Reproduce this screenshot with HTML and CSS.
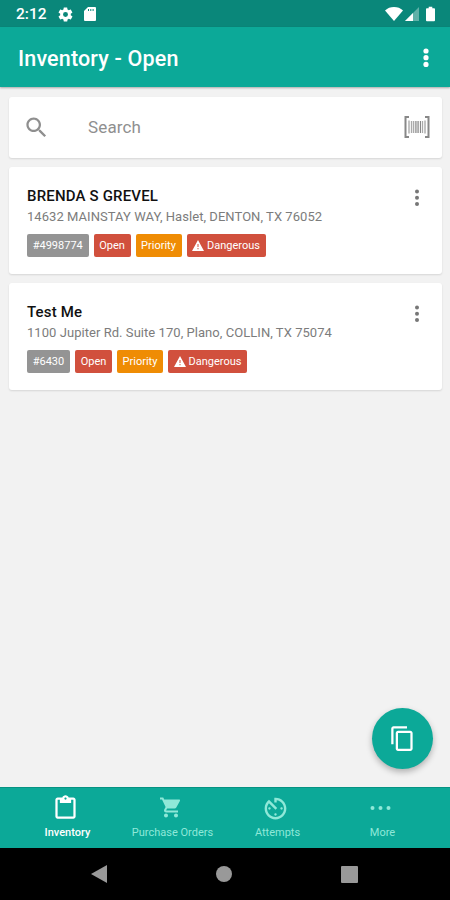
FILE: index.html
```html
<!DOCTYPE html>
<html lang="en">
<head>
  <meta charset="UTF-8" />
  <meta name="viewport" content="width=device-width, initial-scale=1.0"/>
  <title>Inventory - Open</title>
  <link rel="stylesheet" href="styles.css">
</head>
<body>

  <div class="status-bar">
    <span class="time">2:12</span>
    <svg class="gear" width="17" height="17" viewBox="0 0 24 24"><path d="M19.4 13c0-.3.1-.6.1-1s0-.7-.1-1l2.1-1.600c.2-.2.2-.4.1-.6l-2-3.500c-.1-.2-.4-.3-.6-.2l-2.500 1c-.5-.4-1.100-.7-1.700-1l-.4-2.600c0-.3-.2-.5-.4-.5h-4c-.2 0-.5.2-.5.4l-.4 2.700c-.6.2-1.100.6-1.700 1l-2.500-1c-.2-.1-.5 0-.6.200l-2 3.500c-.1.200 0 .5.200.6L4.600 11c0 .3-.1.600-.1 1s0 .700.100 1l-2.100 1.600c-.2.200-.3.400-.200.600l2 3.500c.1.200.4.300.600.200l2.500-1c.5.400 1.100.700 1.700 1l.400 2.600c0 .300.200.500.500.500h4c.200 0 .500-.200.500-.400l.400-2.700c.600-.200 1.100-.600 1.700-1l2.500 1c.200.100.500 0 .600-.200l2-3.500c.100-.200 0-.500-.200-.600zM12 15.500a3.500 3.500 0 1 1 0-7 3.500 3.500 0 0 1 0 7z"/></svg>
    <svg class="sd" width="12" height="14" viewBox="0 0 12 14"><path d="M4 0h7a1 1 0 0 1 1 1v12a1 1 0 0 1-1 1H1a1 1 0 0 1-1-1V4z"/><path class="slot" d="M4 2h1v2H4zM6.300 2h1v2h-1zM8.600 2h1v2h-1z"/></svg>
    <div class="signals">
      <svg width="18" height="14" viewBox="0 0 18 14"><path d="M0 3.500C2.500 1 5.500 0 9 0s6.500 1 9 3.500L9 14z"/></svg>
      <svg width="14" height="14" viewBox="0 0 14 14"><path opacity=".35" d="M14 0v14H0z"/><path d="M8 6v8H0z"/></svg>
      <svg class="battery" width="9" height="16" viewBox="0 0 10 16"><path d="M3 0h4v1.500h2a1 1 0 0 1 1 1V15a1 1 0 0 1-1 1H1a1 1 0 0 1-1-1V2.500a1 1 0 0 1 1-1h2z"/></svg>
    </div>
  </div>

  <header class="app-bar">
    <h1>Inventory - Open</h1>
    <svg width="6" height="20" viewBox="0 0 6 20"><circle cx="3" cy="3" r="2.600"/><circle cx="3" cy="9.700" r="2.600"/><circle cx="3" cy="16.400" r="2.600"/></svg>
  </header>

  <main>
    <div class="card search">
      <svg class="search-icon" width="27" height="27" viewBox="0 0 24 24"><path d="M15.500 14h-.790l-.280-.270C15.410 12.590 16 11.110 16 9.500 16 5.910 13.090 3 9.500 3S3 5.910 3 9.500 5.910 16 9.500 16c1.610 0 3.090-.590 4.230-1.570l.270.280v.790l5 4.990L20.490 19l-4.990-5zm-6 0C7.010 14 5 11.990 5 9.500S7.010 5 9.500 5 14 7.010 14 9.500 11.990 14 9.500 14z"/></svg>
      <span class="placeholder">Search</span>
      <svg class="barcode" width="26" height="22" viewBox="0 0 26 22">
        <path class="bracket" d="M5 1H1.500v20H5M21 1h3.500v20H21"/>
        <path class="lines" d="M5 4.500v13M21 4.500v13"/>
        <path class="lines light" d="M7.500 5v12M9.500 5v12M11.500 5v12M14.500 5v12M18.500 5v12"/>
        <path class="lines" d="M13 5v12M16.500 5v12"/>
      </svg>
    </div>

    <div class="card item">
      <h2>BRENDA S GREVEL</h2>
      <p>14632 MAINSTAY WAY, Haslet, DENTON, TX 76052</p>
      <div class="tags">
        <span class="tag number">#4998774</span>
        <span class="tag open">Open</span>
        <span class="tag priority">Priority</span>
        <span class="tag danger"><svg width="12" height="11" viewBox="0 0 12 11"><path fill-rule="evenodd" d="M6 0l6 11H0zM5.500 4v3h1V4zm0 4v1.200h1V8z"/></svg>Dangerous</span>
      </div>
      <svg class="dots" width="6" height="18" viewBox="0 0 6 18"><circle cx="3" cy="2.500" r="2"/><circle cx="3" cy="8.800" r="2"/><circle cx="3" cy="15.100" r="2"/></svg>
    </div>

    <div class="card item">
      <h2>Test Me</h2>
      <p>1100 Jupiter Rd. Suite 170, Plano, COLLIN, TX 75074</p>
      <div class="tags">
        <span class="tag number short">#6430</span>
        <span class="tag open">Open</span>
        <span class="tag priority">Priority</span>
        <span class="tag danger"><svg width="12" height="11" viewBox="0 0 12 11"><path fill-rule="evenodd" d="M6 0l6 11H0zM5.500 4v3h1V4zm0 4v1.200h1V8z"/></svg>Dangerous</span>
      </div>
      <svg class="dots" width="6" height="18" viewBox="0 0 6 18"><circle cx="3" cy="2.500" r="2"/><circle cx="3" cy="8.800" r="2"/><circle cx="3" cy="15.100" r="2"/></svg>
    </div>
  </main>

  <div class="fab">
    <svg width="27" height="27" viewBox="0 0 24 24"><path d="M16 1H4c-1.100 0-2 .9-2 2v14h2V3h12V1zm3 4H8c-1.100 0-2 .9-2 2v14c0 1.100.9 2 2 2h11c1.100 0 2-.9 2-2V7c0-1.100-.9-2-2-2zm0 16H8V7h11v14z"/></svg>
  </div>

  <nav class="tabs">
    <a class="tab active">
      <svg width="27" height="27" viewBox="0 0 24 24"><path d="M19 3h-4.180C14.400 1.840 13.300 1 12 1s-2.400.840-2.820 2H5c-1.100 0-2 .9-2 2v15c0 1.100.9 2 2 2h14c1.100 0 2-.9 2-2V5c0-1.100-.9-2-2-2zm-7 0c.550 0 1 .450 1 1s-.450 1-1 1-1-.450-1-1 .450-1 1-1zm7 17H5V5h2v3h10V5h2v15z"/></svg>
      <span>Inventory</span>
    </a>
    <a class="tab orders">
      <svg width="24" height="26" viewBox="0 0 24 24"><path d="M7 18c-1.100 0-2 .9-2 2s.9 2 2 2 2-.9 2-2-.9-2-2-2zM1 2v2h2l3.600 7.590-1.350 2.450c-.160.280-.250.610-.250.960 0 1.100.9 2 2 2h12v-2H7.420c-.140 0-.250-.110-.250-.250l.030-.120.900-1.630h7.450c.750 0 1.410-.410 1.750-1.030l3.580-6.490A1 1 0 0 0 20 4H5.210l-.940-2H1zm16 16c-1.100 0-2 .9-2 2s.9 2 2 2 2-.9 2-2-.9-2-2-2z"/></svg>
      <span>Purchase Orders</span>
    </a>
    <a class="tab attempts">
      <svg width="29" height="29" viewBox="0 0 24 24"><path d="M11 17c0 .550.450 1 1 1s1-.450 1-1-.450-1-1-1-1 .450-1 1zm0-14v4h2V5.080c3.390.490 6 3.390 6 6.920 0 3.870-3.130 7-7 7s-7-3.130-7-7c0-1.680.590-3.220 1.580-4.420L12 13l1.410-1.410-6.800-6.800v.020C4.420 6.450 3 9.050 3 12c0 4.970 4.020 9 9 9 4.970 0 9-4.030 9-9s-4.030-9-9-9h-1zm7 9c0-.550-.450-1-1-1s-1 .450-1 1 .450 1 1 1 1-.450 1-1zM6 12c0 .550.450 1 1 1s1-.450 1-1-.450-1-1-1-1 .450-1 1z"/></svg>
      <span>Attempts</span>
    </a>
    <a class="tab">
      <svg width="27" height="27" viewBox="0 0 27 27"><circle cx="5.500" cy="14" r="2"/><circle cx="13.500" cy="14" r="2"/><circle cx="21.500" cy="14" r="2"/></svg>
      <span>More</span>
    </a>
  </nav>

  <div class="system-nav">
    <svg width="16" height="18" viewBox="0 0 16 18"><path d="M16 0v18L0 9z"/></svg>
    <svg width="16" height="16" viewBox="0 0 16 16"><circle cx="8" cy="8" r="8"/></svg>
    <svg width="17" height="17" viewBox="0 0 17 17"><rect width="17" height="17" rx="1"/></svg>
  </div>

</body>
</html>
```
FILE: styles.css
```css
* {
  box-sizing: border-box;
}
body {
  margin: 0;
  height: 900px;
  display: flex;
  flex-direction: column;
  position: relative;
  overflow: hidden;
  background: #f2f2f2;
  font-family: Roboto, "Liberation Sans", sans-serif;
}
svg {
  display: block;
  fill: currentColor;
  flex: none;
}
.status-bar {
  height: 27px;
  display: flex;
  align-items: center;
  padding: 1px 15px 0 16px;
  background: #0a877a;
  color: #fff;
}
.time {
  width: 41px;
  font-size: 15.5px;
  font-weight: 500;
}
.gear {
  margin-right: 10px;
}
.slot {
  fill: #0a877a;
}
.signals {
  display: flex;
  align-items: center;
  gap: 2px;
  margin-left: auto;
}
.battery {
  margin-left: 5px;
}
.app-bar {
  height: 60px;
  display: flex;
  align-items: center;
  justify-content: space-between;
  padding: 2px 21px 0 18px;
  background: #0ca998;
  color: #fff;
  box-shadow: 0 1px 2px rgba(0, 0, 0, 0.3);
}
h1 {
  margin: 0;
  font-size: 21.5px;
  font-weight: 500;
  letter-spacing: 0.17px;
}
main {
  flex: 1;
  display: flex;
  flex-direction: column;
  gap: 9px;
  padding: 10px 8px 0 9px;
}
.card {
  background: #fff;
  border-radius: 3px;
  box-shadow: 0 1px 2px rgba(0, 0, 0, 0.12);
}
.search {
  height: 61px;
  display: flex;
  align-items: center;
  padding: 0 12px 1px 14px;
  color: #8f8f8f;
}
.placeholder {
  flex: 1;
  margin-left: 38px;
  font-size: 17px;
  letter-spacing: 0.15px;
}
.bracket,
.lines {
  fill: none;
  stroke: #888;
  stroke-width: 2;
}
.lines {
  stroke-width: 1;
}
.light {
  stroke: #aaa;
  stroke-width: 1.3;
}
.item {
  height: 107px;
  position: relative;
  padding: 19px 18px 0;
}
h2 {
  margin: 0;
  font-size: 15px;
  line-height: 20px;
  font-weight: 500;
  letter-spacing: 0.17px;
  color: #111;
}
p {
  margin: 1px 0 0;
  font-size: 13px;
  line-height: 20px;
  letter-spacing: 0.05px;
  color: #7c7c7c;
  white-space: nowrap;
}
.tags {
  display: flex;
  gap: 5px;
  margin-top: 7px;
}
.tag {
  height: 23px;
  display: flex;
  align-items: center;
  justify-content: center;
  border-radius: 2px;
  font-size: 11px;
  color: #fff;
}
.number {
  width: 61.5px;
  background: #949494;
}
.short {
  width: 43px;
}
.open {
  width: 37px;
  background: #d1503d;
}
.priority {
  width: 46px;
  background: #ef8c04;
}
.danger {
  width: 79px;
  gap: 3px;
  background: #d1503d;
}
.dots {
  position: absolute;
  top: 22px;
  right: 22px;
  color: #777;
}
.fab {
  position: absolute;
  right: 17px;
  bottom: 131px;
  width: 61px;
  height: 61px;
  display: flex;
  align-items: center;
  justify-content: center;
  padding-right: 1px;
  border-radius: 50%;
  background: #0ca998;
  color: #fff;
  box-shadow: 0 3px 6px rgba(0, 0, 0, 0.28);
}
.tabs {
  height: 61px;
  display: flex;
  padding: 0 15px;
  background: #0ca998;
  border-top: 1px solid #079383;
}
.tab {
  flex: 1;
  display: flex;
  flex-direction: column;
  align-items: center;
  padding-top: 6px;
  font-size: 11px;
  line-height: 14px;
  color: #8fe8d8;
}
.tab svg {
  height: 27px;
  margin-right: 5px;
}
.tab span {
  margin-top: 5px;
}
.tab.orders svg {
  margin-right: 3px;
}
.tab.attempts svg {
  height: 29px;
}
.tab.attempts span {
  margin-top: 3px;
}
.tab.active {
  color: #fff;
  font-weight: 500;
}
.system-nav {
  height: 52px;
  display: flex;
  align-items: center;
  justify-content: space-between;
  padding: 0 92px 0 91px;
  background: #000;
  color: #999;
}
```
